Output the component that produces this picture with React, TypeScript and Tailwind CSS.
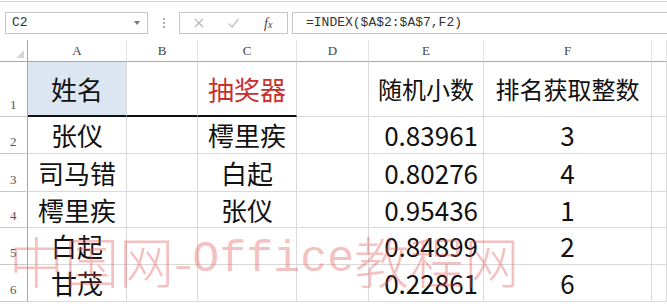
const cols = ['A', 'B', 'C', 'D', 'E', 'F', ''];
const colTpl = 'grid-cols-[28px_99px_71px_99px_72px_115px_168px_1fr]';

type Row = {
  n: number;
  h: string;
  a: string;
  c: string;
  e: string;
  f: string;
};

const rows: Row[] = [
  { n: 2, h: 'h-[37px]', a: '张仪', c: '樗里疾', e: '0.83961', f: '3' },
  { n: 3, h: 'h-[38px]', a: '司马错', c: '白起', e: '0.80276', f: '4' },
  { n: 4, h: 'h-[36px]', a: '樗里疾', c: '张仪', e: '0.95436', f: '1' },
  { n: 5, h: 'h-[37px]', a: '白起', c: '', e: '0.84899', f: '2' },
  { n: 6, h: 'h-[37px]', a: '甘茂', c: '', e: '0.22861', f: '6' },
];

const cell = 'border-r border-b border-[#d9d9d9] flex items-center';
const rowHead =
  'border-r border-b border-[#c8c8c8] border-r-[#a8a8a8] flex items-end pb-[5px] pl-[10px] text-[13px] text-[#555] font-["Liberation_Serif",serif] leading-none';

function FormulaBar() {
  return (
    <div className="h-[39px] border-t border-[#d4d4d4] mt-[1px] flex items-start pt-[10px] font-['Liberation_Mono',monospace] text-[13px] text-[#333]">
      <div className="ml-[5px] w-[143px] h-[22px] border border-[#c6c6c6] flex items-center pl-[6px] pr-[7px]">
        <span className="flex-1">C2</span>
        <span className="w-0 h-0 border-l-[3px] border-r-[3px] border-t-[4px] border-l-transparent border-r-transparent border-t-[#777]" />
      </div>
      <div className="w-[31px] h-[22px] flex flex-col items-center justify-center gap-[2px]">
        <span className="w-[2px] h-[2px] bg-[#aaa]" />
        <span className="w-[2px] h-[2px] bg-[#aaa]" />
        <span className="w-[2px] h-[2px] bg-[#aaa]" />
      </div>
      <div className="w-[109px] h-[22px] border border-[#c6c6c6] flex items-center">
        <svg width="12" height="12" viewBox="0 0 12 12" className="ml-[13px]">
          <path d="M2 2 L10 10 M10 2 L2 10" stroke="#b5b5b5" strokeWidth="1.2" fill="none" />
        </svg>
        <svg width="13" height="12" viewBox="0 0 13 12" className="ml-[22px]">
          <path d="M1.5 6.5 L5 10 L11.5 2" stroke="#c8c8c8" strokeWidth="1.6" fill="none" />
        </svg>
        <span className="ml-[24px] italic font-['Liberation_Serif',serif] text-[14px] text-[#444]">
          f<span className="text-[10px]">x</span>
        </span>
      </div>
      <div className="ml-[4px] flex-1 h-[22px] border border-[#c6c6c6] border-r-0 flex items-center pl-[13px]">
        =INDEX($A$2:$A$7,F2)
      </div>
    </div>
  );
}

export default function App() {
  return (
    <div className="relative w-[667px] h-[304px] overflow-hidden bg-white font-['Noto_Sans_CJK_SC',sans-serif] text-[#111]">
      <FormulaBar />
      <div className={`grid ${colTpl}`}>
        {/* column headers */}
        <div className="h-[22px] border-r border-b border-[#a8a8a8] relative">
          <span className="absolute right-[3px] bottom-[3px] w-0 h-0 border-l-[8px] border-t-[8px] border-l-transparent border-t-transparent border-b-0 border-r-[8px] border-r-[#d6d6d6]" />
        </div>
        {cols.map((c, i) => (
          <div
            key={i}
            className="h-[22px] border-r border-b border-[#e3e3e3] border-b-[#a8a8a8] flex items-center justify-center text-[13px] text-[#444] font-['Liberation_Serif',serif]"
          >
            {c}
          </div>
        ))}

        {/* row 1 */}
        <div className={`h-[55px] ${rowHead}`}>1</div>
        <div className="h-[55px] border-r border-b-2 border-[#d9d9d9] border-b-[#111] bg-[#dce6f2] flex items-center justify-center text-[26px] leading-none">
          姓名
        </div>
        <div className="h-[55px] border-r border-b-2 border-[#d9d9d9] border-b-[#111]" />
        <div className="h-[55px] border-r border-b-2 border-[#d9d9d9] border-b-[#111] flex items-center justify-center text-[26px] leading-none text-[#c9302c]">
          抽奖器
        </div>
        <div className={`h-[55px] ${cell}`} />
        <div className={`h-[55px] ${cell} justify-center text-[24px] leading-none`}>随机小数</div>
        <div className={`h-[55px] ${cell} justify-center text-[24px] leading-none`}>排名获取整数</div>
        <div className={`h-[55px] ${cell}`} />

        {rows.map((r) => (
          <div key={r.n} className="contents">
            <div className={`${r.h} ${rowHead}`}>{r.n}</div>
            <div className={`${r.h} ${cell} justify-center text-[26px] leading-none`}>{r.a}</div>
            <div className={`${r.h} ${cell}`} />
            <div className={`${r.h} ${cell} justify-center text-[26px] leading-none`}>{r.c}</div>
            <div className={`${r.h} ${cell}`} />
            <div className={`${r.h} ${cell} justify-end pr-[5px] text-[26px] leading-none`}>{r.e}</div>
            <div className={`${r.h} ${cell} justify-center text-[26px] leading-none`}>{r.f}</div>
            <div className={`${r.h} ${cell}`} />
          </div>
        ))}
      </div>

      {/* watermark */}
      <div className="absolute left-[9px] top-[232px] flex items-center whitespace-nowrap pointer-events-none text-[#e24a4a]/35 leading-none">
        <span className="text-[55px] font-light">中国网-</span>
        <span className="text-[45px] font-['Liberation_Mono',monospace]">Office</span>
        <span className="text-[55px] font-light">教程网</span>
      </div>
    </div>
  );
}
